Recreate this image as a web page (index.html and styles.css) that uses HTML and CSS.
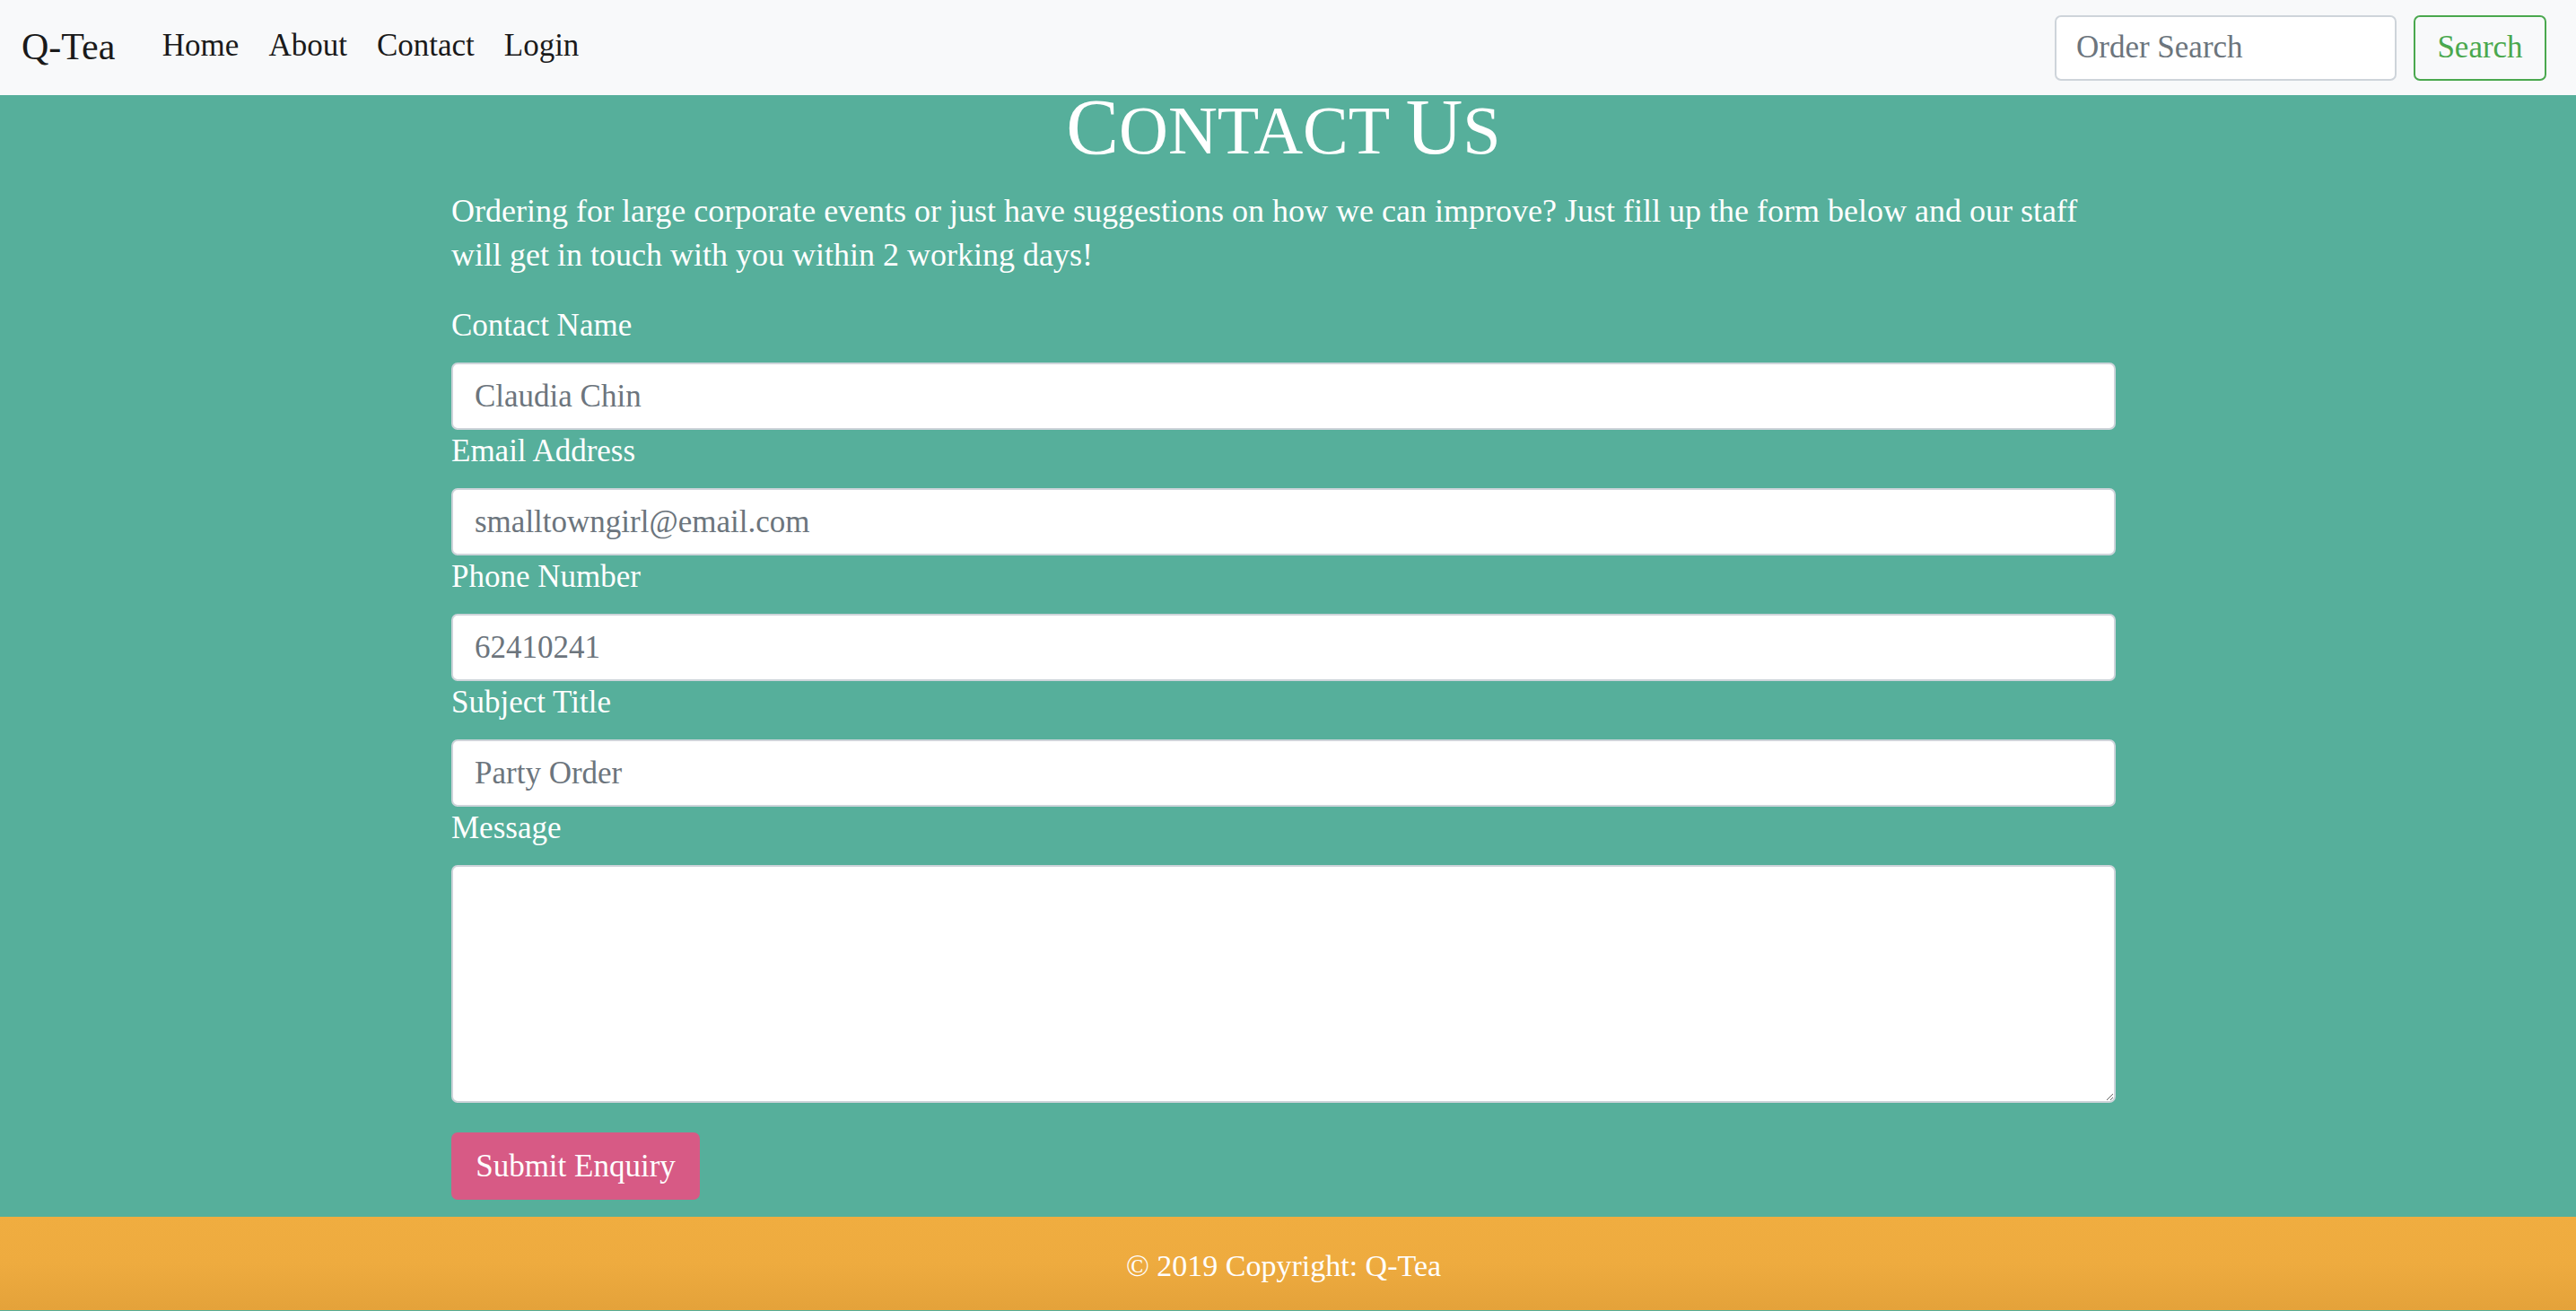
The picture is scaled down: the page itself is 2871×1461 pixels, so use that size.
FILE: index.html
```html
<!DOCTYPE html>
<html lang="en">
<head>
<meta charset="utf-8">
<title>Q-Tea | Contact</title>
<link rel="stylesheet" href="styles.css">
</head>
<body>
<nav class="navbar">
  <a class="brand" href="#">Q-Tea</a>
  <ul class="nav-links">
    <li><a href="#">Home</a></li>
    <li><a href="#">About</a></li>
    <li><a href="#">Contact</a></li>
    <li><a href="#">Login</a></li>
  </ul>
  <form class="search-form">
    <input class="search-input" type="text" placeholder="Order Search">
    <button class="search-btn" type="button">Search</button>
  </form>
</nav>
<main class="main">
  <div class="container">
    <h1 class="title"><span class="cap">C</span>ontact <span class="cap">U</span>s</h1>
    <p class="intro">Ordering for large corporate events or just have suggestions on how we can improve? Just fill up the form below and our staff will get in touch with you within 2 working days!</p>
    <form class="contact-form">
      <label class="field-label" for="name">Contact Name</label>
      <input class="field" id="name" type="text" placeholder="Claudia Chin">
      <label class="field-label" for="email">Email Address</label>
      <input class="field" id="email" type="email" placeholder="smalltowngirl@email.com">
      <label class="field-label" for="phone">Phone Number</label>
      <input class="field" id="phone" type="text" placeholder="62410241">
      <label class="field-label" for="subject">Subject Title</label>
      <input class="field" id="subject" type="text" placeholder="Party Order">
      <label class="field-label" for="message">Message</label>
      <textarea class="field field-area" id="message"></textarea>
      <button class="submit-btn" type="button">Submit Enquiry</button>
    </form>
  </div>
</main>
<footer class="footer">
  <p class="copyright">© 2019 Copyright: Q-Tea</p>
</footer>
</body>
</html>
```
FILE: styles.css
```css
* {
  box-sizing: border-box;
}

html, body {
  margin: 0;
  padding: 0;
}

body {
  font-family: "Liberation Serif", "Times New Roman", serif;
  font-size: 35px;
  line-height: 48.5px;
  color: #212529;
  background: #56af9b;
}

a {
  text-decoration: none;
}

/* Navbar */
.navbar {
  display: flex;
  align-items: center;
  height: 106px;
  padding: 0 33px 0 24px;
  background: #f8f9fa;
}

.brand {
  font-size: 42px;
  color: #1a1a1a;
  margin-right: 36px;
  line-height: 1;
  margin-top: -3px;
}

.nav-links {
  display: flex;
  list-style: none;
  margin: -3px 0 0;
  padding: 0;
  flex: 1;
}

.nav-links a {
  display: block;
  padding: 0 16.5px;
  color: #1a1a1a;
  font-size: 35px;
}

.search-form {
  display: flex;
  align-items: center;
  gap: 19px;
}

.search-input {
  width: 381px;
  height: 73px;
  padding: 0 22px;
  border: 2px solid #ced4da;
  border-radius: 7px;
  background: #fff;
  font-family: inherit;
  font-size: 35px;
  color: #495057;
}

.search-input::placeholder,
.field::placeholder {
  color: #6c757d;
  opacity: 1;
}

.search-btn {
  width: 148px;
  height: 73px;
  padding: 0;
  border: 2px solid #4aa84e;
  border-radius: 7px;
  background: transparent;
  color: #4aa84e;
  font-family: inherit;
  font-size: 35px;
}

/* Main */
.main {
  padding: 0 10px 19px 0;
}

.container {
  width: 1855px;
  margin: 0 auto;
}

.title {
  margin: 3px 0 33px;
  text-align: center;
  font-weight: normal;
  font-size: 76px;
  line-height: 66px;
  text-transform: uppercase;
  color: #fff;
}

.title .cap {
  font-size: 88px;
}

.intro {
  margin: 0 0 31px;
  font-size: 36px;
  color: #fff;
}

.contact-form {
  display: flex;
  flex-direction: column;
  align-items: flex-start;
}

.field-label {
  display: block;
  margin-bottom: 16.5px;
  color: #fff;
}

.field {
  display: block;
  width: 100%;
  height: 75px;
  padding: 0 24px;
  border: 2px solid #ced4da;
  border-radius: 7px;
  background: #fff;
  font-family: inherit;
  font-size: 35px;
  color: #495057;
}

.field-area {
  height: 265px;
  padding: 12px 24px;
  resize: vertical;
}

.submit-btn {
  margin-top: 33px;
  width: 277px;
  height: 75px;
  padding: 0;
  border: none;
  border-radius: 7px;
  background: #d75a85;
  color: #fff;
  font-family: inherit;
  font-size: 35px;
}

/* Footer */
.footer {
  height: 104px;
  display: flex;
  align-items: center;
  justify-content: center;
  padding: 6px 10px 0 0;
  background: linear-gradient(to bottom, #f0ad40 0%, #eeab3f 50%, #e4a23a 100%);
}

.copyright {
  margin: 0;
  font-size: 34px;
  color: #fff;
}
```
